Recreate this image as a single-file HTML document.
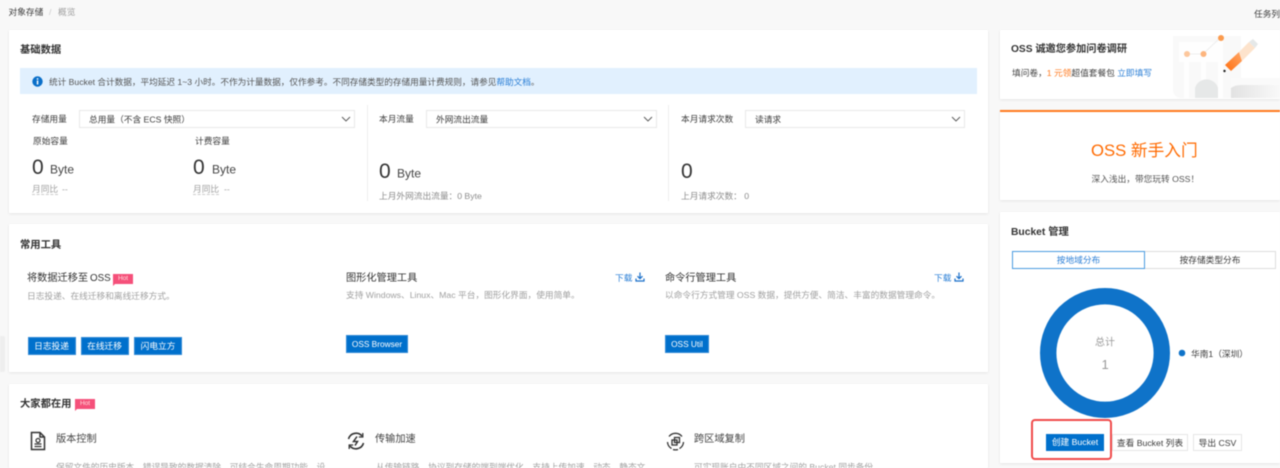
<!DOCTYPE html>
<html lang="zh">
<head>
<meta charset="utf-8">
<title>对象存储 概览</title>
<style>
html,body{margin:0;padding:0;width:1280px;height:468px;overflow:hidden;background:#f8f8f8}
#r{position:relative;width:1280px;height:468px;overflow:hidden;font-family:"Liberation Sans","Noto Sans CJK SC",sans-serif;font-size:8.7px;color:#3c3c3c;filter:blur(.45px)}
.c{position:absolute;background:#fff;box-shadow:0 1px 3px rgba(0,0,0,.08)}
.t{position:absolute;white-space:nowrap;line-height:1;transform:translateY(calc(-50% + 1.3px))}
.h{font-size:10.300px;font-weight:700;color:#333}
.g{color:#a0a0a0}
.m{color:#8c8c8c}
.n{font-size:21px;color:#333}
.u{font-size:12px;color:#444}
.k{font-size:10.200px;color:#333;word-spacing:-1px}
.s{position:absolute;box-sizing:border-box;height:18px;border:1px solid #e8e8e8;background:#fff}
.s svg{position:absolute;right:3px;top:4px}
.s span{position:absolute;left:9px;top:50%;transform:translateY(calc(-50% + 1px));white-space:nowrap;line-height:1}
.b{position:absolute;box-sizing:border-box;height:18px;background:#0070cc;color:#fff;text-align:center;line-height:17px;border:1px solid #2f88d4;white-space:nowrap}
.w{position:absolute;box-sizing:border-box;height:17px;background:#fff;color:#3c3c3c;text-align:center;line-height:16px;border:1px solid #e6e6e6;white-space:nowrap}
.hot{position:absolute;width:20px;height:10px;background:#f5507a;color:#fdd;font-size:6.500px;line-height:10px;text-align:center}
.hot:after{content:"";position:absolute;left:0;top:10px;border-top:2px solid #f5507a;border-right:2px solid transparent}
.d{position:absolute;width:1px;background:#eee}
.l{color:#2b7fd6}
</style>
</head>
<body>
<div id="r">
<span class="t" style="left:8.500px;top:10.500px;color:#3c3c3c">对象存储</span>
<span class="t" style="left:49px;top:10.500px;color:#ccc">/</span>
<span class="t g" style="left:58px;top:10.500px">概览</span>
<span class="t" style="left:1254px;top:12.500px">任务列表</span>

<div style="position:absolute;left:0;top:336px;width:5px;height:36px;background:#eee;border-radius:0 2px 2px 0"></div>

<div class="c" style="left:9px;top:29.500px;width:979px;height:183.500px"></div>
<span class="t h" style="left:20px;top:50.300px">基础数据</span>
<div style="position:absolute;left:20px;top:68px;width:957px;height:26px;background:#e1f0fe"></div>
<svg style="position:absolute;left:31.500px;top:75.500px" width="11" height="11" viewBox="0 0 11 11"><circle cx="5.500" cy="5.500" r="5.200" fill="#0a6fc9"/><rect x="4.800" y="2.200" width="1.500" height="1.500" fill="#fff"/><rect x="4.800" y="4.500" width="1.500" height="4" fill="#fff"/></svg>
<span class="t" style="left:49px;top:80.500px;color:#555;font-size:8.650px">统计 Bucket 合计数据，平均延迟 1~3 小时。不作为计量数据，仅作参考。不同存储类型的存储用量计费规则，请参见<span style="color:#2b7fd6">帮助文档</span>。</span>

<span class="t" style="left:32px;top:118px">存储用量</span>
<div class="s" style="left:79px;top:110px;width:276px"><span>总用量（不含 ECS 快照）</span><svg width="10" height="8" viewBox="0 0 10 8"><path d="M1 2l4 4 4-4" fill="none" stroke="#555" stroke-width=".9"/></svg></div>
<span class="t" style="left:33px;top:139.500px">原始容量</span>
<span class="t" style="left:195px;top:139.500px">计费容量</span>
<span class="t n" style="left:32px;top:165.500px">0</span><span class="t u" style="left:50px;top:168px">Byte</span>
<span class="t n" style="left:193px;top:165.500px">0</span><span class="t u" style="left:212px;top:168px">Byte</span>
<span class="t g" style="left:32px;top:188.500px;border-bottom:1px dashed #ccc;padding-bottom:1px">月同比</span><span class="t g" style="left:62px;top:188px">--</span>
<span class="t g" style="left:193px;top:188.500px;border-bottom:1px dashed #ccc;padding-bottom:1px">月同比</span><span class="t g" style="left:224px;top:188px">--</span>

<div class="d" style="left:367px;top:105px;height:96px"></div>
<span class="t" style="left:379px;top:118px">本月流量</span>
<div class="s" style="left:426px;top:110px;width:231px"><span>外网流出流量</span><svg width="10" height="8" viewBox="0 0 10 8"><path d="M1 2l4 4 4-4" fill="none" stroke="#555" stroke-width=".9"/></svg></div>
<span class="t n" style="left:379px;top:169.500px">0</span><span class="t u" style="left:397px;top:172px">Byte</span>
<span class="t m" style="left:379px;top:194.500px">上月外网流出流量：0 Byte</span>

<div class="d" style="left:668px;top:105px;height:96px"></div>
<span class="t" style="left:681px;top:118px">本月请求次数</span>
<div class="s" style="left:745px;top:110px;width:220px"><span>读请求</span><svg width="10" height="8" viewBox="0 0 10 8"><path d="M1 2l4 4 4-4" fill="none" stroke="#555" stroke-width=".9"/></svg></div>
<span class="t n" style="left:681px;top:169.500px">0</span>
<span class="t m" style="left:681px;top:194.500px">上月请求次数： 0</span>

<div class="c" style="left:9px;top:224px;width:979px;height:148px"></div>
<span class="t h" style="left:20px;top:244.800px">常用工具</span>
<span class="t k" style="left:27px;top:278.300px">将数据迁移至 <span style="font-size:9.800px">OSS</span></span>
<div class="hot" style="left:113px;top:274px">Hot</div>
<span class="t g" style="left:27px;top:295px">日志投递、在线迁移和离线迁移方式。</span>
<div class="b" style="left:27.500px;top:336.500px;width:48px">日志投递</div>
<div class="b" style="left:80.500px;top:336.500px;width:48px">在线迁移</div>
<div class="b" style="left:134px;top:336.500px;width:48px">闪电立方</div>

<span class="t k" style="left:346px;top:278.300px">图形化管理工具</span>
<span class="t l" style="left:615px;top:276.500px">下载</span>
<svg style="position:absolute;left:635px;top:272px" width="10" height="10" viewBox="0 0 10 10"><path d="M5 .5v6M2.500 4.200L5 6.700l2.500-2.500M1 6.500v2.500h8V6.500" fill="none" stroke="#1a6fc9" stroke-width="1.200"/></svg>
<span class="t g" style="left:346px;top:294px">支持 Windows、Linux、Mac 平台，图形化界面，使用简单。</span>
<div class="b" style="left:346px;top:335px;width:62px;font-size:8.300px">OSS Browser</div>

<span class="t k" style="left:665px;top:278.300px">命令行管理工具</span>
<span class="t l" style="left:934px;top:276.500px">下载</span>
<svg style="position:absolute;left:954px;top:272px" width="10" height="10" viewBox="0 0 10 10"><path d="M5 .5v6M2.500 4.200L5 6.700l2.500-2.500M1 6.500v2.500h8V6.500" fill="none" stroke="#1a6fc9" stroke-width="1.200"/></svg>
<span class="t g" style="left:665px;top:294px">以命令行方式管理 OSS 数据，提供方便、简洁、丰富的数据管理命令。</span>
<div class="b" style="left:665px;top:335px;width:44px;font-size:8.300px">OSS Util</div>

<div class="c" style="left:9px;top:384px;width:979px;height:90px"></div>
<span class="t h" style="left:20px;top:404.300px">大家都在用</span>
<div class="hot" style="left:75px;top:399px">Hot</div>

<svg style="position:absolute;left:30px;top:431px" width="16" height="20" viewBox="0 0 16 20"><path d="M1.500 1.500h8.500l4.500 4.500v12.500h-13zM10 1.500v4.500h4.500" fill="none" stroke="#333" stroke-width="1.500"/><circle cx="8" cy="9.500" r="2" fill="none" stroke="#333" stroke-width="1.200"/><path d="M4.500 13h7M4.500 15.500h7" stroke="#333" stroke-width="1.200"/></svg>
<span class="t k" style="left:56px;top:438.800px;color:#444">版本控制</span>
<span class="t g" style="left:56px;top:465.500px">保留文件的历史版本，错误导致的数据清除，可结合生命周期功能，设</span>

<svg style="position:absolute;left:346px;top:431px" width="20" height="20" viewBox="0 0 20 20"><path d="M2.500 8A7.800 7.800 0 0 1 16 5M17.500 12A7.800 7.800 0 0 1 4 15" fill="none" stroke="#333" stroke-width="1.600"/><path d="M16.800 2v4h-4M3.200 18v-4h4" fill="none" stroke="#333" stroke-width="1.300"/><path d="M11 5.500L7.500 10.500h4L9 14.500" fill="none" stroke="#333" stroke-width="1.500"/></svg>
<span class="t k" style="left:375px;top:438.800px;color:#444">传输加速</span>
<span class="t g" style="left:376px;top:465.500px">从传输链路、协议到存储的端到端优化，支持上传加速，动态、静态文</span>

<svg style="position:absolute;left:666px;top:431px" width="19" height="20" viewBox="0 0 19 20"><path d="M3 5.500A8.200 8.200 0 0 1 16 5.500M1.500 11a8 8 0 0 0 4 6.500M17.500 11a8 8 0 0 1-4 6.500M7 18.500a8 8 0 0 0 5 0" fill="none" stroke="#333" stroke-width="1.300"/><rect x="6" y="9" width="5" height="5" fill="none" stroke="#333" stroke-width="1.300"/><rect x="8.500" y="6.500" width="5" height="5" fill="none" stroke="#333" stroke-width="1.300"/></svg>
<span class="t k" style="left:694px;top:438.800px;color:#444">跨区域复制</span>
<span class="t g" style="left:694px;top:465.500px">可实现账户中不同区域之间的 Bucket 同步备份</span>

<div class="c" style="left:1000px;top:29.500px;width:280px;height:69.500px"></div>
<svg style="position:absolute;left:1165px;top:28px" width="115" height="71" viewBox="0 0 115 71">
<defs><linearGradient id="a" x1="0" x2="1" y1="0" y2="0"><stop offset="0" stop-color="#e2e2e2"/><stop offset="1" stop-color="#f9f9f9"/></linearGradient><linearGradient id="o" x1="0" x2="1" y1="1" y2="0"><stop offset="0" stop-color="#ff6f10"/><stop offset="1" stop-color="#ffa768"/></linearGradient></defs>
<path d="M8 8h68v54a8 8 0 0 1-8 8H16a8 8 0 0 1-8-8z" fill="#f9f9f9"/>
<rect x="66" y="50" width="49" height="20" fill="#fafafa"/>
<path d="M66 70V60q4-3 10-3h39v13z" fill="url(#a)"/>
<rect x="14" y="14" width="44" height="20" fill="#fefefe"/>
<rect x="19" y="34" width="5" height="36" fill="#fefefe"/>
<rect x="36" y="34" width="5" height="20" fill="#fefefe"/>
<rect x="53" y="10" width="5" height="60" fill="#fefefe"/>
<path d="M30 70v-10a12 12 0 0 1 23 0v10z" fill="#e6e8e8"/>
<path d="M22 26h16l17-16" fill="none" stroke="#eee" stroke-width="1"/>
<circle cx="22" cy="26" r="3" fill="#fdc79c"/><circle cx="38.500" cy="26" r="3" fill="#fdb57e"/><circle cx="56" cy="10" r="3" fill="#fb9b4e"/>
<path d="M60 37l14-13 3 9-11 10z" fill="url(#o)"/>
<path d="M74 24l10-10 6 6-13 13z" fill="#fde3cc"/>
<path d="M84 14l4-3 5 5-3 4z" fill="#e5e8e8"/>
<circle cx="59.500" cy="43" r="1.200" fill="#222"/>
</svg>
<span class="t" style="left:1011px;top:49.300px;font-size:10.200px;font-weight:700;color:#333">OSS 诚邀您参加问卷调研</span>
<span class="t" style="left:1012px;top:71.500px;color:#444">填问卷，<span style="color:#ff7a1f">1 元领</span>超值套餐包 <span class="l">立即填写</span></span>

<div class="c" style="left:1000px;top:110px;width:280px;height:90px;border-top:2px solid #ff7a1f;box-sizing:border-box"></div>
<span class="t" style="left:1091px;top:149.800px;font-size:16.700px;color:#ff6a00">OSS 新手入门</span>
<span class="t" style="left:1091.500px;top:177.500px;color:#555">深入浅出，带您玩转 OSS！</span>

<div class="c" style="left:1000px;top:212px;width:280px;height:251px"></div>
<span class="t" style="left:1011px;top:232.300px;font-size:10.300px;font-weight:700;color:#333">Bucket 管理</span>
<div class="w" style="left:1144px;top:251px;width:132px;height:18px;border-color:#ddd;line-height:17px">按存储类型分布</div>
<div class="w" style="left:1012px;top:251px;width:133px;height:18px;border-color:#4a9be0;color:#2b7fd6;line-height:17px">按地域分布</div>

<svg style="position:absolute;left:1035px;top:283px" width="140" height="140" viewBox="0 0 140 140"><circle cx="70" cy="70" r="56.800" fill="none" stroke="#0f73c9" stroke-width="16.400"/></svg>
<span class="t g" style="left:1095px;top:341.500px;font-size:10px;color:#999">总计</span>
<span class="t g" style="left:1101.500px;top:362.500px;font-size:13px;color:#999">1</span>
<svg style="position:absolute;left:1178px;top:349px" width="8" height="8" viewBox="0 0 8 8"><circle cx="4" cy="4" r="3.300" fill="#0f73c9"/></svg>
<span class="t" style="left:1191px;top:352.500px">华南1（深圳）</span>

<div class="b" style="left:1046px;top:434px;width:58px;height:17px;line-height:17px;border:0">创建 Bucket</div>
<div class="w" style="left:1112px;top:434px;width:76px">查看 Bucket 列表</div>
<div class="w" style="left:1193px;top:434px;width:49px">导出 CSV</div>
<div style="position:absolute;left:1031px;top:419px;width:81px;height:41px;box-sizing:border-box;border:2.500px solid #f04a4a;border-radius:4px"></div>
</div>
</body>
</html>
